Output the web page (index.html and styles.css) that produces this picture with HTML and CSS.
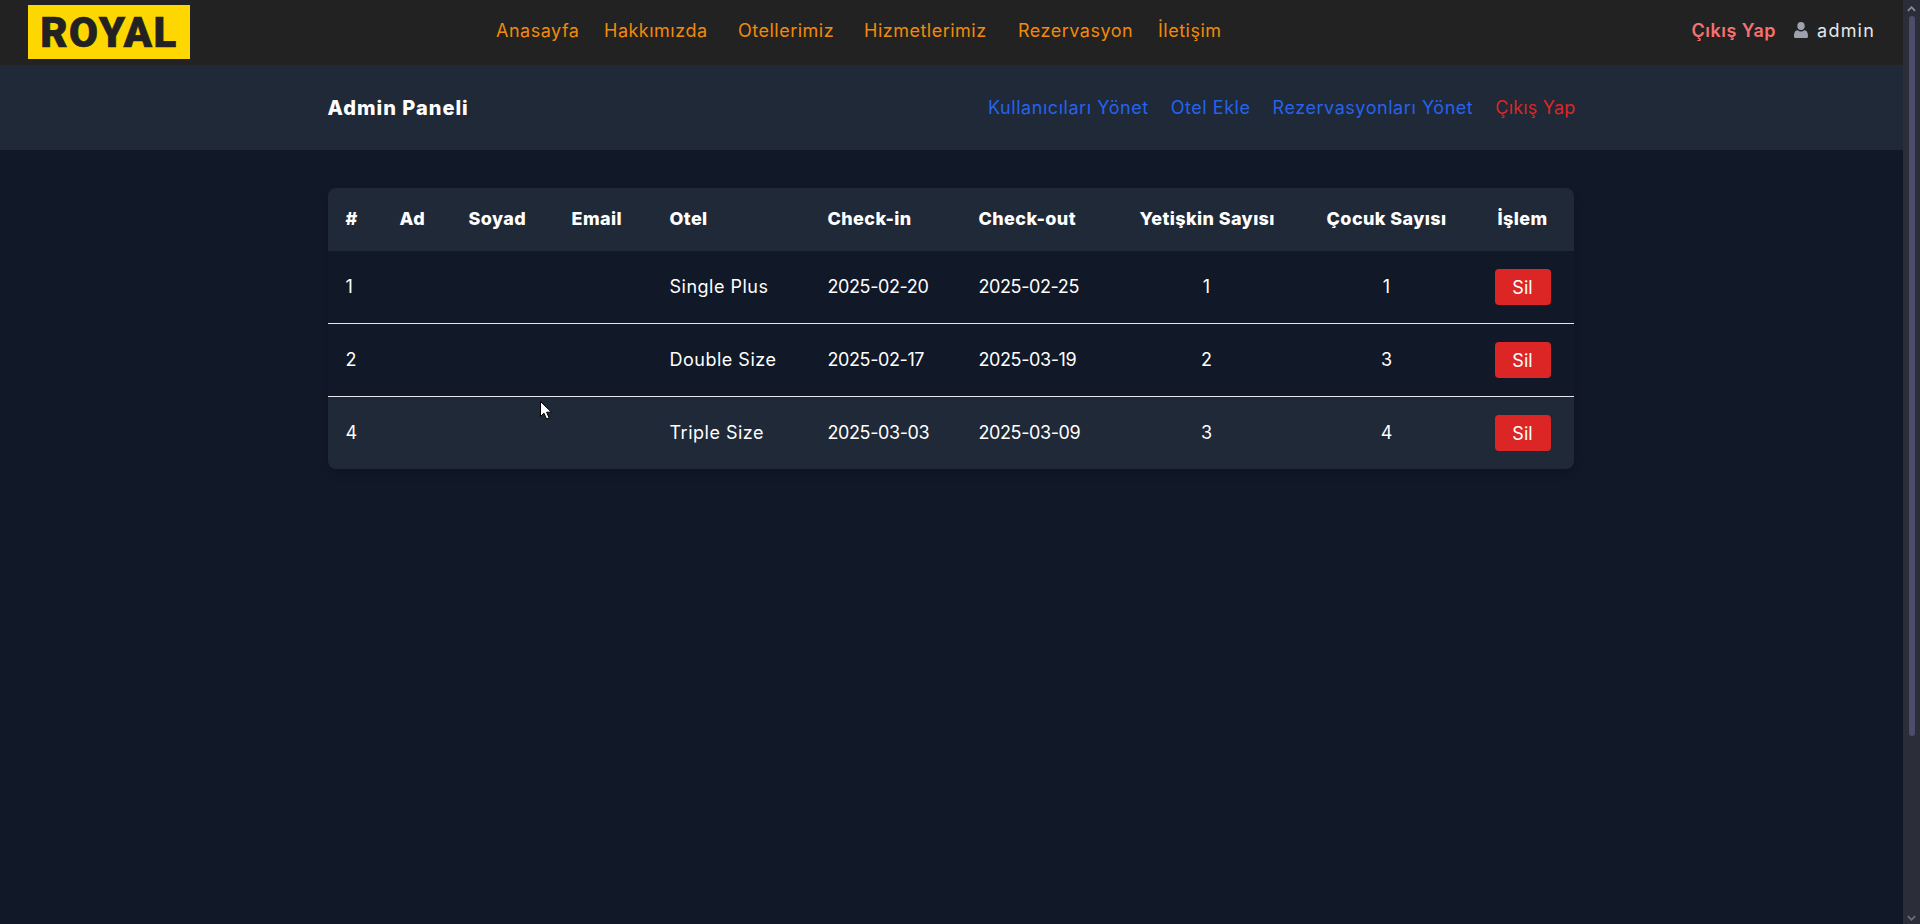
FILE: index.html
```html
<!DOCTYPE html>
<html lang="tr">
<head>
    <meta charset="UTF-8">
    <meta name="viewport" content="width=device-width, initial-scale=1.0">
    <title>Admin Paneli</title>
    <link rel="stylesheet" href="styles.css">
</head>
<body>

    <div class="page">
        <header class="navbar">
            <a class="logo" href="#">ROYAL</a>
            <nav class="main-nav">
                <a href="#">Anasayfa</a>
                <a href="#">Hakkımızda</a>
                <a href="#">Otellerimiz</a>
                <a href="#">Hizmetlerimiz</a>
                <a href="#">Rezervasyon</a>
                <a href="#">İletişim</a>
            </nav>
            <div class="user-box">
                <a class="logout" href="#">Çıkış Yap</a>
                <span class="user">
                    <svg class="user-icon" viewBox="0 0 14 16" aria-hidden="true">
                        <ellipse cx="7" cy="4" rx="3.7" ry="4"/>
                        <path d="M1.500 16c-.9 0-1.500-.6-1.500-1.500 0-3.200.8-6.200 3.700-6.200 1 .8 2.100 1.200 3.300 1.200s2.300-.4 3.300-1.200c2.900 0 3.700 3 3.700 6.200 0 .9-.6 1.500-1.500 1.500z"/>
                    </svg>
                    <span class="user-name">admin</span>
                </span>
            </div>
        </header>

        <div class="admin-bar">
            <div class="container admin-bar-inner">
                <h1>Admin Paneli</h1>
                <nav class="admin-nav">
                    <a href="#">Kullanıcıları Yönet</a>
                    <a href="#">Otel Ekle</a>
                    <a href="#">Rezervasyonları Yönet</a>
                    <a class="danger" href="#">Çıkış Yap</a>
                </nav>
            </div>
        </div>

        <main class="container">
            <table class="res-table">
                <colgroup>
                    <col class="c-id"><col class="c-ad"><col class="c-soyad"><col class="c-email"><col class="c-otel">
                    <col class="c-in"><col class="c-out"><col class="c-adult"><col class="c-child"><col class="c-act">
                </colgroup>
                <thead>
                    <tr>
                        <th>#</th>
                        <th>Ad</th>
                        <th>Soyad</th>
                        <th>Email</th>
                        <th>Otel</th>
                        <th>Check-in</th>
                        <th>Check-out</th>
                        <th class="center">Yetişkin Sayısı</th>
                        <th class="center">Çocuk Sayısı</th>
                        <th class="center act">İşlem</th>
                    </tr>
                </thead>
                <tbody>
                    <tr>
                        <td>1</td><td></td><td></td><td></td>
                        <td class="name">Single Plus</td>
                        <td class="date">2025-02-20</td>
                        <td class="date">2025-02-25</td>
                        <td class="center">1</td>
                        <td class="center">1</td>
                        <td class="center act"><button type="button">Sil</button></td>
                    </tr>
                    <tr>
                        <td>2</td><td></td><td></td><td></td>
                        <td class="name">Double Size</td>
                        <td class="date">2025-02-17</td>
                        <td class="date">2025-03-19</td>
                        <td class="center">2</td>
                        <td class="center">3</td>
                        <td class="center act"><button type="button">Sil</button></td>
                    </tr>
                    <tr class="hovered">
                        <td>4</td><td></td><td></td><td></td>
                        <td class="name">Triple Size</td>
                        <td class="date">2025-03-03</td>
                        <td class="date">2025-03-09</td>
                        <td class="center">3</td>
                        <td class="center">4</td>
                        <td class="center act"><button type="button">Sil</button></td>
                    </tr>
                </tbody>
            </table>
        </main>
    </div>

    <div class="scrollbar">
        <svg class="arrow" viewBox="0 0 10 6" aria-hidden="true"><path d="M1 5l4-4 4 4"/></svg>
        <div class="thumb"></div>
        <svg class="arrow down" viewBox="0 0 10 6" aria-hidden="true"><path d="M1 1l4 4 4-4"/></svg>
    </div>

    <svg class="cursor" viewBox="0 0 12 19" aria-hidden="true">
        <path d="M.5.5v15l3.500-3.300 2.500 5.800 2.600-1.100-2.500-5.700h4.900z" fill="#fff" stroke="#000" stroke-width="1"/>
    </svg>

</body>
</html>
```

FILE: styles.css
```css
html, body {
    height: 100%;
}

body {
    display: flex;
    font-family: 'Inter', 'Noto Sans', sans-serif;
    font-size: 18px;
    background-color: #111827;
    color: #fff;
    margin: 0;
    padding: 0;
    overflow: hidden;
}

a {
    text-decoration: none;
}

.page {
    flex: 1;
    min-width: 0;
}

.container {
    max-width: 1248px;
    margin: 0 auto;
}

/* navbar */
.navbar {
    display: flex;
    align-items: center;
    height: 65px;
    padding: 0 28px;
    box-sizing: border-box;
    background-color: #222222;
}

.logo {
    display: flex;
    align-items: center;
    justify-content: center;
    flex-shrink: 0;
    width: 162px;
    height: 54px;
    margin-bottom: 1px;
    background-color: #ffd700;
    color: #222222;
    font-family: 'Roboto', sans-serif;
    font-size: 42px;
    font-weight: 900;
    letter-spacing: 1.5px;
    -webkit-text-stroke: 0.6px #222222;
}

.main-nav {
    display: grid;
    grid-template-columns: 108px 134px 126px 154px 140px auto;
    margin-left: 306px;
    margin-bottom: 5px;
    letter-spacing: 0.5px;
}

.main-nav a {
    color: #f08a0c;
}

.user-box {
    display: flex;
    align-items: center;
    gap: 18px;
    margin-left: auto;
    margin-bottom: 5px;
}

.logout {
    color: #f87171;
    font-weight: 600;
    letter-spacing: 0.5px;
}

.user {
    display: flex;
    align-items: center;
    gap: 9px;
    color: #e5e7eb;
}

.user-name {
    letter-spacing: 1.2px;
}

.user-icon {
    width: 14px;
    height: 16px;
    fill: #9ca3af;
}

/* admin bar */
.admin-bar {
    background-color: #1f2937;
    height: 85px;
}

.admin-bar-inner {
    display: flex;
    align-items: center;
    justify-content: space-between;
    height: 100%;
}

.admin-bar h1 {
    margin: 0;
    font-size: 20px;
    font-weight: 800;
    letter-spacing: 1px;
}

.admin-nav {
    display: flex;
    gap: 22px;
    letter-spacing: 0.55px;
}

.admin-nav a {
    color: #2563eb;
}

.admin-nav a.danger {
    color: #dc2626;
    letter-spacing: 0.2px;
}

/* table */
.res-table {
    width: 1246px;
    margin-top: 38px;
    border-collapse: separate;
    border-spacing: 0;
    table-layout: fixed;
    background-color: #111827;
    border-radius: 8px;
    overflow: hidden;
    box-shadow: 0 4px 10px rgba(0, 0, 0, 0.15);
}

.c-id { width: 54px; }
.c-ad { width: 69px; }
.c-soyad { width: 103px; }
.c-email { width: 98px; }
.c-otel { width: 158px; }
.c-in { width: 151px; }
.c-out { width: 161px; }
.c-adult { width: 170px; }
.c-child { width: 190px; }
.c-act { width: 92px; }

th, td {
    padding: 0 18px 2px;
    text-align: left;
}

th {
    height: 61px;
    background-color: #1f2937;
    font-weight: 800;
    letter-spacing: 0.4px;
    white-space: nowrap;
}

td {
    height: 70px;
    border-bottom: 1px solid #e5e7eb;
}

td.name {
    letter-spacing: 0.5px;
}

td.date {
    letter-spacing: -0.4px;
}

tbody tr:last-child td {
    border-bottom: none;
}

.hovered td {
    background-color: #1f2937;
}

th.center, td.center {
    text-align: center;
}

th.act {
    padding: 0 23px 2px 13px;
}

td.act {
    height: 72px;
    padding: 0 23px 0 13px;
}

button {
    width: 56px;
    height: 36px;
    padding: 0;
    border: none;
    border-radius: 4px;
    background-color: #dc2626;
    color: #fff;
    font: inherit;
    vertical-align: middle;
    cursor: pointer;
}

/* browser scrollbar in the picture */
.scrollbar {
    display: flex;
    flex-direction: column;
    align-items: center;
    flex-shrink: 0;
    width: 17px;
    background-color: #2b2d38;
}

.arrow {
    flex-shrink: 0;
    width: 9px;
    height: 6px;
    margin-top: 6px;
    fill: none;
    stroke: #8a8b98;
    stroke-width: 2;
}

.arrow.down {
    margin-top: auto;
    margin-bottom: 3px;
    stroke: #6d6e7c;
}

.thumb {
    width: 6px;
    height: 720px;
    margin-top: 4px;
    border-radius: 3px;
    background-color: #4d4d6b;
}

/* mouse pointer in the picture */
.cursor {
    position: absolute;
    left: 540px;
    top: 401px;
    width: 12px;
    height: 19px;
}
```
